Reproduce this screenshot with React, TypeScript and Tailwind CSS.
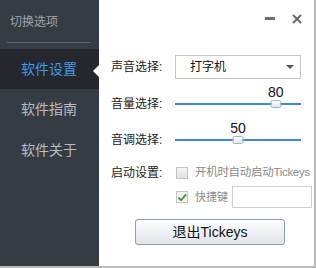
import React from "react";

const font = { fontFamily: '"Liberation Sans", "Noto Sans CJK SC", sans-serif' };

function Slider({ value }: { value: number }) {
  return (
    <div className="relative h-[24px] w-[126px]">
      <div className="absolute left-0 right-0 top-[11px] h-[2px] bg-[#3f87d6]" />
      <div
        className="absolute top-[8px] h-[8px] w-[11px] -translate-x-1/2 rounded-[2px] border border-[#9fb4cc] bg-gradient-to-b from-white to-[#dde6ef]"
        style={{ left: `${value}%` }}
      />
      <div
        className="absolute top-[-7px] -translate-x-1/2 text-[14px] leading-[14px] text-[#111]"
        style={{ left: `${value}%` }}
      >
        {value}
      </div>
    </div>
  );
}

export default function App() {
  return (
    <div className="h-[268px] w-[316px] bg-[#b9b9b9]" style={font}>
      <div className="flex h-[266px] w-[314px]">
        <div className="relative flex w-[99px] shrink-0 flex-col bg-[#363c44]">
          <div className="pl-[10px] pt-[13px] text-[12px] leading-[18px] text-[#a0a5ab]">切换选项</div>
          <div className="ml-[7px] mt-[11px] h-px w-[84px] bg-[#5c636b]" />
          <div className="mt-[6px] flex h-[40px] items-center bg-[#24282e] pl-[21px] text-[14px] text-[#3d9be9]">
            软件设置
          </div>
          <div className="flex h-[41px] items-center pl-[21px] text-[14px] text-[#b9bdc2]">软件指南</div>
          <div className="flex h-[41px] items-center pl-[21px] text-[14px] text-[#b9bdc2]">软件关于</div>
          <div className="absolute right-0 top-[65px] h-0 w-0 border-y-[6px] border-r-[6px] border-y-transparent border-r-white" />
        </div>
        <div className="flex min-w-0 flex-1 flex-col overflow-hidden bg-white pl-[12px]">
          <div className="flex h-[37px] items-center justify-end pr-[12px]">
            <div className="mr-[17px] h-[3px] w-[10px] bg-[#707070]" />
            <svg width="10" height="10" viewBox="0 0 10 10">
              <path d="M1 1 L9 9 M9 1 L1 9" stroke="#6a6a6a" strokeWidth="2" />
            </svg>
          </div>
          <div className="mt-[18px] flex h-[24px] items-center">
            <div className="w-[64px] text-[12px] text-[#222]">声音选择:</div>
            <div className="flex h-[24px] w-[126px] items-center justify-between border border-[#c6c6c6] pl-[14px] pr-[6px] text-[12px] text-[#111]">
              <span>打字机</span>
              <span className="h-0 w-0 border-x-[4px] border-t-[4px] border-x-transparent border-t-[#555]" />
            </div>
          </div>
          <div className="mt-[13px] flex h-[24px] items-center">
            <div className="w-[64px] text-[12px] text-[#222]">音量选择:</div>
            <Slider value={80} />
          </div>
          <div className="mt-[12px] flex h-[24px] items-center">
            <div className="w-[64px] text-[12px] text-[#222]">音调选择:</div>
            <Slider value={50} />
          </div>
          <div className="mt-[9px] flex h-[24px] items-center whitespace-nowrap">
            <div className="w-[65px] text-[12px] text-[#222]">启动设置:</div>
            <div className="h-[12px] w-[12px] border border-[#c4c4c4] bg-gradient-to-b from-[#f4f4f4] to-[#e2e2e2]" />
            <div className="ml-[7px] text-[11.5px] tracking-[-0.3px] text-[#8a8a8a]">开机时自动启动Tickeys</div>
          </div>
          <div className="mt-[1px] flex h-[22px] items-center whitespace-nowrap">
            <div className="w-[65px]" />
            <div className="flex h-[12px] w-[12px] items-center justify-center border border-[#c4c4c4] bg-[#f4f4f4]">
              <svg width="11" height="11" viewBox="0 0 11 11">
                <path d="M1.5 5.5 L4.5 8.5 L10 2" stroke="#3f9a3f" strokeWidth="2" fill="none" />
              </svg>
            </div>
            <div className="ml-[7px] w-[37px] text-[11px] text-[#8a8a8a]">快捷键</div>
            <div className="h-[22px] w-[80px] border border-[#cfcfcf]" />
          </div>
          <div className="ml-[24px] mt-[11px] flex h-[26px] w-[150px] items-center justify-center rounded-[3px] border border-[#8d9bb0] bg-gradient-to-b from-[#fdfdfe] to-[#dfe4ea] text-[14px] text-[#111]">
            退出Tickeys
          </div>
        </div>
      </div>
    </div>
  );
}
